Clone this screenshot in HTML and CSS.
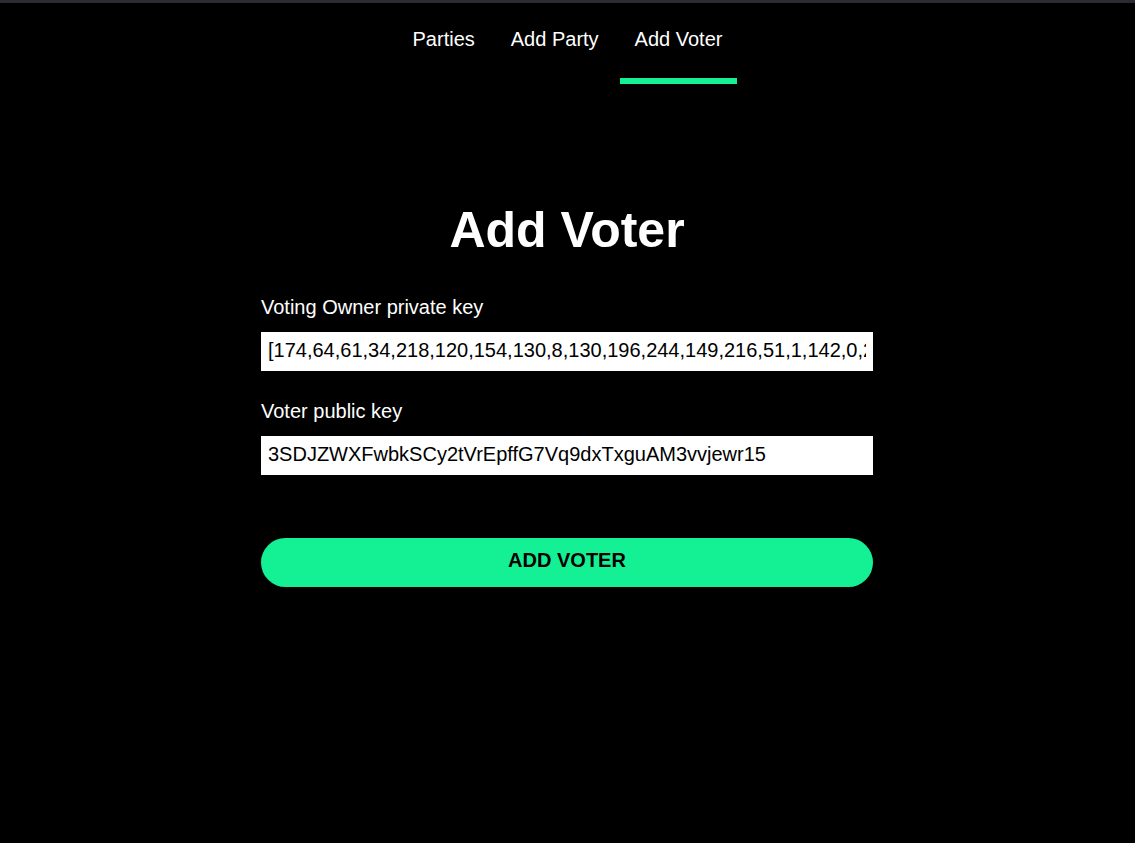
FILE: index.html
```html
<!DOCTYPE html>
<html lang="en">
<head>
<meta charset="utf-8">
<title>Add Voter</title>
<link rel="stylesheet" href="styles.css">
</head>
<body>
<div class="topbar"></div>
<nav class="nav">
  <a class="nav-link" href="#">Parties</a>
  <a class="nav-link" href="#">Add Party</a>
  <a class="nav-link active" href="#">Add Voter</a>
</nav>
<main class="main">
  <h1 class="title">Add Voter</h1>
  <form class="form">
    <label class="label" for="owner">Voting Owner private key</label>
    <input class="input" id="owner" type="text" value="[174,64,61,34,218,120,154,130,8,130,196,244,149,216,51,1,142,0,201,77,19,88,240,12,3,55,91,166,210,44]">
    <label class="label second" for="voter">Voter public key</label>
    <input class="input" id="voter" type="text" value="3SDJZWXFwbkSCy2tVrEpffG7Vq9dxTxguAM3vvjewr15">
    <button class="button" type="button">ADD VOTER</button>
  </form>
</main>
</body>
</html>
```
FILE: styles.css
```css
* { box-sizing: border-box; }
html, body {
  margin: 0;
  padding: 0;
  background: #000;
  color: #fff;
  font-family: "Liberation Sans", Arial, sans-serif;
}
.topbar {
  height: 3px;
  background: #2b2b31;
}
.nav {
  display: flex;
  justify-content: center;
  gap: 6px;
}
.nav-link {
  display: block;
  color: #fff;
  text-decoration: none;
  font-size: 20px;
  line-height: 23px;
  padding: 25px 15px 27px;
  border-bottom: 6px solid transparent;
}
.nav-link.active {
  border-bottom-color: #14f195;
}
.main {
  width: 613px;
  padding-right: 1px;
  margin: 0 auto;
}
.title {
  margin: 118px 0 0;
  text-align: center;
  font-size: 50px;
  font-weight: bold;
  line-height: 57px;
}
.form {
  display: flex;
  flex-direction: column;
  margin-top: 37px;
}
.label {
  font-size: 20px;
  line-height: 23px;
  margin-bottom: 13px;
}
.label.second {
  margin-top: 29px;
}
.input {
  width: 100%;
  height: 39px;
  border: none;
  outline: none;
  padding: 7px 7px 9px;
  font-family: "Liberation Sans", Arial, sans-serif;
  font-size: 20px;
  color: #000;
  background: #fff;
}
.button {
  margin-top: 63px;
  height: 49px;
  border: none;
  border-radius: 25px;
  padding: 0 0 4px;
  background: #14f195;
  color: #000;
  font-family: "Liberation Sans", Arial, sans-serif;
  font-size: 20px;
  font-weight: bold;
  cursor: pointer;
}
```
